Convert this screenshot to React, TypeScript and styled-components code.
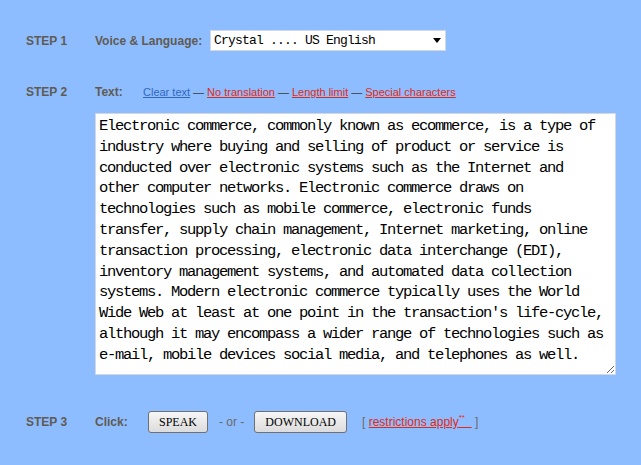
import styled, { createGlobalStyle } from "styled-components";

const GlobalStyle = createGlobalStyle`
    html, body {
        margin: 0;
        padding: 0;
        background: #8ebdff;
        min-height: 100%;
    }
    body {
        font-family: "Liberation Sans", Arial, sans-serif;
    }
`;

const sampleText =
    "Electronic commerce, commonly known as ecommerce, is a type of industry where buying and selling of product or service is conducted over electronic systems such as the Internet and other computer networks. Electronic commerce draws on technologies such as mobile commerce, electronic funds transfer, supply chain management, Internet marketing, online transaction processing, electronic data interchange (EDI), inventory management systems, and automated data collection systems. Modern electronic commerce typically uses the World Wide Web at least at one point in the transaction's life-cycle, although it may encompass a wider range of technologies such as e-mail, mobile devices social media, and telephones as well.";

export default function App() {
    return (
        <>
            <GlobalStyle />
            <Page>
                <Step $top={30}>
                    <StepLabel $h={21}>STEP 1</StepLabel>
                    <StepBody>
                        <Line $h={21}>
                            <FieldLabel $w={115}>Voice &amp; Language:</FieldLabel>
                            <SelectWrap>
                                <VoiceSelect defaultValue="crystal">
                                    <option value="crystal">Crystal .... US English</option>
                                    <option value="mike">Mike ....... US English</option>
                                    <option value="rich">Rich ....... US English</option>
                                </VoiceSelect>
                            </SelectWrap>
                        </Line>
                    </StepBody>
                </Step>

                <Step $top={33}>
                    <StepLabel $h={16}>STEP 2</StepLabel>
                    <StepBody>
                        <Line $h={16}>
                            <FieldLabel $w={48}>Text:</FieldLabel>
                            <Links>
                                <LinkItem $tone="blue" href="#">Clear text</LinkItem>
                                <Dash>—</Dash>
                                <LinkItem $tone="red" href="#">No translation</LinkItem>
                                <Dash>—</Dash>
                                <LinkItem $tone="red" href="#">Length limit</LinkItem>
                                <Dash>—</Dash>
                                <LinkItem $tone="red" href="#">Special characters</LinkItem>
                            </Links>
                        </Line>
                        <TextBox defaultValue={sampleText} spellCheck={false} />
                    </StepBody>
                </Step>

                <Step $top={36}>
                    <StepLabel $h={22}>STEP 3</StepLabel>
                    <StepBody>
                        <Line $h={22}>
                            <FieldLabel $w={53}>Click:</FieldLabel>
                            <Actions>
                                <ActionButton>SPEAK</ActionButton>
                                <OrText>- or -</OrText>
                                <ActionButton>DOWNLOAD</ActionButton>
                                <Restrictions>
                                    [ <LinkItem $tone="red" href="#">restrictions apply<sup>**</sup>&nbsp;&nbsp;</LinkItem> ]
                                </Restrictions>
                            </Actions>
                        </Line>
                    </StepBody>
                </Step>
            </Page>
        </>
    );
}

const Page = styled.main`
    display: flex;
    flex-direction: column;
    padding: 0 0 0 26px;
    color: #5f5b52;
`;

const Step = styled.section<{ $top: number }>`
    display: flex;
    align-items: flex-start;
    margin-top: ${p => p.$top}px;
`;

const StepLabel = styled.div<{ $h: number }>`
    width: 69px;
    height: ${p => p.$h}px;
    display: flex;
    align-items: center;
    font-size: 12px;
    font-weight: bold;
    flex-shrink: 0;
`;

const StepBody = styled.div`
    display: flex;
    flex-direction: column;
`;

const Line = styled.div<{ $h: number }>`
    display: flex;
    align-items: center;
    height: ${p => p.$h}px;
`;

const FieldLabel = styled.span<{ $w: number }>`
    width: ${p => p.$w}px;
    flex-shrink: 0;
    font-size: 12px;
    font-weight: bold;
`;

const SelectWrap = styled.div`
    position: relative;
    display: flex;

    &::after {
        content: "";
        position: absolute;
        right: 5px;
        top: 8px;
        border-left: 4px solid transparent;
        border-right: 4px solid transparent;
        border-top: 5px solid #000;
        pointer-events: none;
    }
`;

const VoiceSelect = styled.select`
    appearance: none;
    width: 236px;
    height: 21px;
    margin: 0;
    padding: 0 0 0 3px;
    border: 1px solid #d2d8e2;
    border-radius: 0;
    background: #fff;
    color: #000;
    font-family: "Liberation Mono", "Courier New", monospace;
    font-size: 13px;
    letter-spacing: -0.8px;
    outline: none;
`;

const Links = styled.div`
    display: flex;
    align-items: center;
    gap: 3px;
    font-size: 11px;
`;

const LinkItem = styled.a<{ $tone: "blue" | "red" }>`
    color: ${p => (p.$tone === "blue" ? "#2f66c0" : "#e02a14")};
    text-decoration: underline;

    & sup {
        font-size: 8px;
        line-height: 0;
        vertical-align: 6px;
    }
`;

const Dash = styled.span`
    color: #3a3a3a;
    font-size: 11px;
`;

const TextBox = styled.textarea`
    box-sizing: border-box;
    width: 521px;
    height: 262px;
    margin: 13px 0 0 0;
    padding: 2px 8px 2px 3px;
    border: 1px solid #d4d8de;
    background: #fff;
    color: #000;
    font-family: "Liberation Mono", "Courier New", monospace;
    font-size: 15.5px;
    letter-spacing: -1.3px;
    line-height: 20.8px;
    outline: none;
    overflow: hidden;
`;

const Actions = styled.div`
    display: flex;
    align-items: center;
`;

const ActionButton = styled.button`
    height: 22px;
    padding: 0 10px;
    margin: 0;
    border: 1px solid #707070;
    border-radius: 3px;
    background: linear-gradient(#f6f6f6, #dcdcdc);
    color: #000;
    font-family: "Liberation Serif", "Times New Roman", serif;
    font-size: 12px;
    cursor: pointer;
`;

const OrText = styled.span`
    margin: 0 10px 0 11px;
    font-size: 12px;
    color: #6a6a6a;
`;

const Restrictions = styled.span`
    margin-left: 15px;
    font-size: 12px;
    color: #6a6a6a;
    white-space: pre;
`;
